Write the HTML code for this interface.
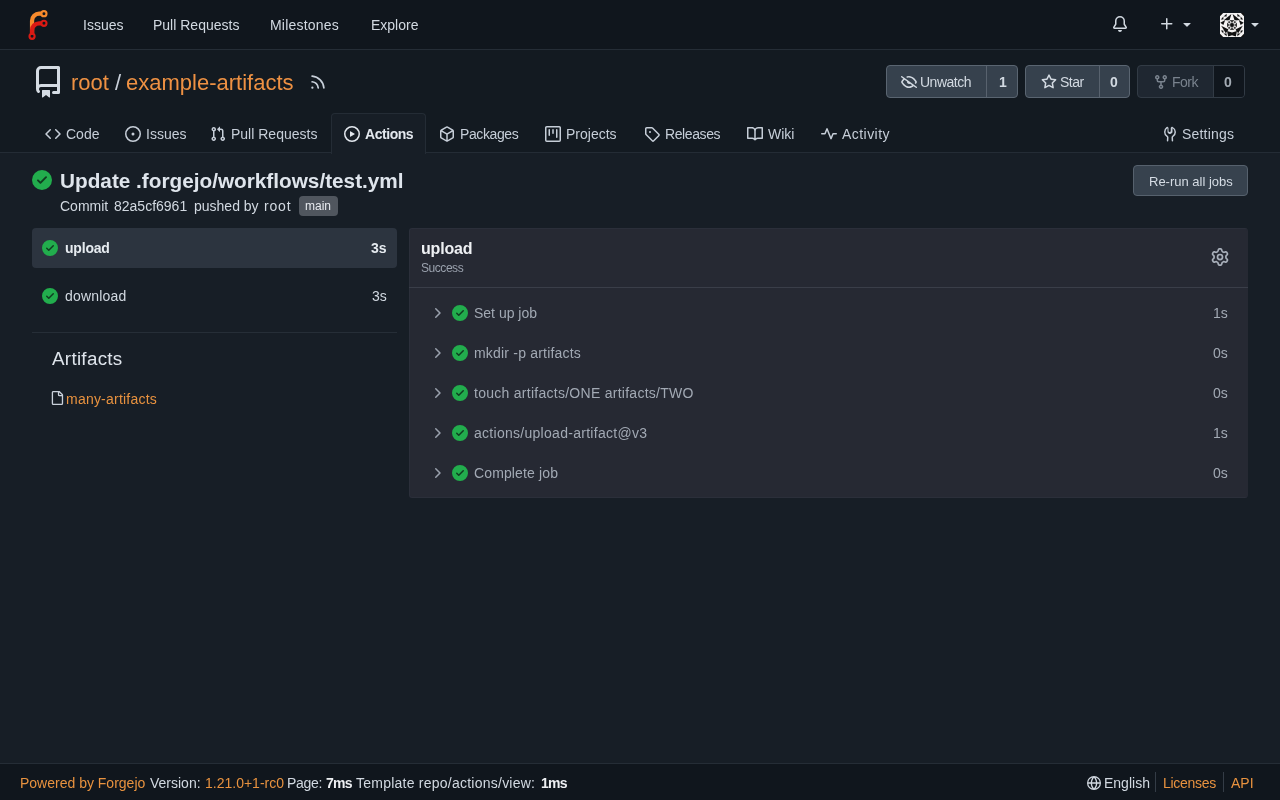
<!DOCTYPE html>
<html>
<head>
<meta charset="utf-8">
<style>
*{box-sizing:border-box;margin:0;padding:0}
html,body{width:1280px;height:800px;overflow:hidden}
body{background:#171e26;font-family:"Liberation Sans",sans-serif;font-size:14px;color:#d2d9e1;position:relative}
.a{position:absolute}
.t{position:absolute;white-space:nowrap;line-height:14px}
svg{display:block}
.ic{fill:currentColor}
#nav{left:0;top:0;width:1280px;height:50px;background:#10161d;border-bottom:1px solid #252d36}
#hdr{left:0;top:50px;width:1280px;height:103px;background:#131a21;border-bottom:1px solid #242c35}
.org{color:#ee9143}
.tab{color:#c6ced8}
.btn{position:absolute;border:1px solid #5a6571;border-radius:4px;background:#36414d;height:33px}
#foot{left:0;top:763px;width:1280px;height:37px;background:#10161d;border-top:1px solid #252d36}
</style>
</head>
<body>
<div id="wrap" style="position:absolute;left:0;top:0;width:1280px;height:800px;will-change:transform">
<!-- NAVBAR -->
<div id="nav" class="a">
  <svg class="a" style="left:23px;top:10px" width="30" height="30" viewBox="0 0 212 212">
    <g transform="translate(6,6)" fill="none">
      <path d="M58 168 v-98 a50 50 0 0 1 50-50 h20" stroke="#f78a2c" stroke-width="30"/>
      <path d="M58 168 v-30 a50 50 0 0 1 50-50 h20" stroke="#d91a14" stroke-width="30"/>
      <circle cx="142" cy="20" r="18" stroke="#f78a2c" stroke-width="15"/>
      <circle cx="142" cy="88" r="18" stroke="#d91a14" stroke-width="15"/>
      <circle cx="58" cy="180" r="18" stroke="#d91a14" stroke-width="15"/>
    </g>
  </svg>
  <span class="t" style="left:83px;top:18px">Issues</span>
  <span class="t" style="left:153px;top:18px">Pull Requests</span>
  <span class="t" style="left:270px;top:18px;letter-spacing:0.2px">Milestones</span>
  <span class="t" style="left:371px;top:18px">Explore</span>
  <svg class="a ic" style="left:1112px;top:16px;color:#d2d9e1" width="16" height="16" viewBox="0 0 16 16"><path d="M8 16a2 2 0 0 0 1.985-1.75c.017-.137-.097-.25-.235-.25h-3.5c-.138 0-.252.113-.235.25A2 2 0 0 0 8 16ZM3 5a5 5 0 0 1 10 0v2.947c0 .05.015.098.042.139l1.703 2.555A1.519 1.519 0 0 1 13.482 13H2.518a1.516 1.516 0 0 1-1.263-2.360l1.703-2.554A.255.255 0 0 0 3 7.947Zm5-3.5A3.5 3.5 0 0 0 4.5 5v2.947c0 .346-.102.683-.294.970l-1.703 2.556a.017.017 0 0 0-.003.01l.001.006c0 .002.002.004.004.006l.006.004.007.001h10.964l.007-.001.006-.004.004-.006.001-.007a.017.017 0 0 0-.003-.01l-1.703-2.554a1.745 1.745 0 0 1-.294-.97V5A3.5 3.5 0 0 0 8 1.5Z"/></svg>
  <svg class="a ic" style="left:1159px;top:16px;color:#d2d9e1" width="16" height="16" viewBox="0 0 16 16"><path d="M7.75 2a.75.75 0 0 1 .75.75V7h4.25a.75.75 0 0 1 0 1.5H8.5v4.25a.75.75 0 0 1-1.5 0V8.5H2.75a.75.75 0 0 1 0-1.5H7V2.75A.75.75 0 0 1 7.75 2Z"/></svg>
  <svg class="a ic" style="left:1179px;top:16px;color:#d2d9e1" width="16" height="16" viewBox="0 0 16 16"><path d="m4.427 7.427 3.396 3.396a.25.25 0 0 0 .354 0l3.396-3.396A.25.25 0 0 0 11.396 7H4.604a.25.25 0 0 0-.177.427Z"/></svg>
  <svg class="a" style="left:1220px;top:13px" width="24" height="24" viewBox="0 0 24 24">
    <rect width="24" height="24" fill="#f5f3f3"/>
    <circle cx="12" cy="12" r="4.6" fill="#9c9c9c"/>
    <g fill="#111"><polygon points="11.40,1.00 4.00,6.90 9.40,7.40"/><polygon points="12.60,1.00 20.00,6.90 14.60,7.40"/><polygon points="0.30,9.80 5.20,7.00 3.40,12.00"/><polygon points="23.70,9.80 18.80,7.00 20.60,12.00"/><polygon points="1.20,12.80 8.60,16.60 5.80,20.20"/><polygon points="22.80,12.80 15.40,16.60 18.20,20.20"/><polygon points="0.00,0.00 3.20,0.00 0.00,3.20"/><polygon points="24.00,0.00 20.80,0.00 24.00,3.20"/><polygon points="6.60,0.80 3.60,3.40 6.60,3.40"/><polygon points="17.40,0.80 20.40,3.40 17.40,3.40"/><polygon points="0.80,6.60 3.40,3.60 3.40,6.60"/><polygon points="23.20,6.60 20.60,3.60 20.60,6.60"/><polygon points="0.00,24.00 3.20,24.00 0.00,20.80"/><polygon points="24.00,24.00 20.80,24.00 24.00,20.80"/><polygon points="0.80,17.40 3.40,20.40 3.40,17.40"/><polygon points="23.20,17.40 20.60,20.40 20.60,17.40"/><polygon points="6.60,23.20 3.60,20.60 6.60,20.60"/><polygon points="17.40,23.20 20.40,20.60 17.40,20.60"/><polygon points="7.00,18.00 12.00,19.40 17.00,18.00 15.80,23.40 12.00,22.20 8.20,23.40"/>
      <circle cx="12" cy="12" r="1.9"/>
      <path d="M9.6 7.2 Q12 10.2 14.4 7.2Z M9.6 16.8 Q12 13.8 14.4 16.8Z M7.2 9.6 Q10.2 12 7.2 14.4Z M16.8 9.6 Q13.8 12 16.8 14.4Z"/>
    </g>
    <g fill="#111" stroke="#f5f3f3" stroke-width="0.9">
      <circle cx="9.1" cy="9.1" r="1.4"/><circle cx="14.9" cy="9.1" r="1.4"/><circle cx="9.1" cy="14.9" r="1.4"/><circle cx="14.9" cy="14.9" r="1.4"/>
    </g>
  </svg>
  <svg class="a ic" style="left:1247px;top:16px;color:#d2d9e1" width="16" height="16" viewBox="0 0 16 16"><path d="m4.427 7.427 3.396 3.396a.25.25 0 0 0 .354 0l3.396-3.396A.25.25 0 0 0 11.396 7H4.604a.25.25 0 0 0-.177.427Z"/></svg>
</div>

<!-- REPO HEADER -->
<div id="hdr" class="a">
  <svg class="a ic" style="left:32px;top:16px;color:#d5dce4" width="32" height="32" viewBox="0 0 16 16"><path d="M2 2.5A2.5 2.5 0 0 1 4.5 0h8.75a.75.75 0 0 1 .75.75v12.5a.75.75 0 0 1-.75.75h-2.5a.75.75 0 0 1 0-1.5h1.75v-2h-8a1 1 0 0 0-.714 1.7.75.75 0 1 1-1.072 1.05A2.495 2.495 0 0 1 2 11.5Zm10.5-1h-8a1 1 0 0 0-1 1v6.708A2.486 2.486 0 0 1 4.5 9h8ZM5 12.25a.25.25 0 0 1 .25-.25h3.5a.25.25 0 0 1 .25.25v3.25a.25.25 0 0 1-.4.2l-1.45-1.087a.25.25 0 0 0-.3 0L5.4 15.7a.25.25 0 0 1-.4-.2Z"/></svg>
  <span class="t org" style="left:71px;top:22px;font-size:22px;line-height:22px">root</span>
  <span class="t" style="left:115px;top:22px;font-size:22px;line-height:22px;color:#c9d1db">/</span>
  <span class="t org" style="left:126px;top:22px;font-size:22px;line-height:22px">example-artifacts</span>
  <svg class="a ic" style="left:308.5px;top:23px;color:#c9d1db" width="18" height="18" viewBox="0 0 16 16"><path d="M2.002 2.725a.75.75 0 0 1 .797-.699C8.79 2.42 13.58 7.21 13.974 13.201a.75.75 0 0 1-1.497.098 10.502 10.502 0 0 0-9.776-9.776.747.747 0 0 1-.7-.798ZM2.84 7.05h-.002a7.002 7.002 0 0 1 6.113 6.111.75.75 0 0 1-1.49.178 5.503 5.503 0 0 0-4.8-4.8.75.75 0 0 1 .179-1.489ZM2 13a1 1 0 1 1 2 0 1 1 0 0 1-2 0Z"/></svg>

  <!-- watch -->
  <div class="btn" style="left:886px;top:15px;width:132px"></div>
  <div class="a" style="left:986px;top:16px;width:1px;height:31px;background:#58626e"></div>
  <svg class="a ic" style="left:901px;top:24px;color:#d2d9e1" width="16" height="16" viewBox="0 0 16 16"><path d="M.143 2.31a.75.75 0 0 1 1.047-.167l14.5 10.5a.75.75 0 1 1-.88 1.214l-2.248-1.628C11.346 13.19 9.792 14 8 14c-1.981 0-3.67-.992-4.933-2.078C1.797 10.832.88 9.577.43 8.9a1.619 1.619 0 0 1 0-1.797c.353-.533.995-1.42 1.868-2.305L.31 3.357A.75.75 0 0 1 .143 2.31Zm1.536 5.622A.12.12 0 0 0 1.657 8c0 .021.006.045.022.068.412.621 1.242 1.75 2.366 2.717C5.175 11.758 6.527 12.5 8 12.5c1.195 0 2.31-.488 3.29-1.191L9.063 9.695A2 2 0 0 1 6.058 7.52L3.529 5.688a14.207 14.207 0 0 0-1.85 2.244ZM8 3.5c-.516 0-1.017.09-1.499.251a.75.75 0 1 1-.473-1.423A6.207 6.207 0 0 1 8 2c1.981 0 3.67.992 4.933 2.078 1.27 1.091 2.187 2.345 2.637 3.023a1.62 1.62 0 0 1 0 1.798c-.11.166-.248.365-.41.587a.75.75 0 1 1-1.21-.887c.148-.201.272-.382.371-.53a.119.119 0 0 0 0-.137c-.412-.621-1.242-1.75-2.366-2.717C10.825 4.242 9.473 3.5 8 3.5Z"/></svg>
  <span class="t" style="left:920px;top:25px;letter-spacing:-0.5px">Unwatch</span>
  <span class="t" style="left:999px;top:25px;font-weight:bold">1</span>

  <!-- star -->
  <div class="btn" style="left:1025px;top:15px;width:105px"></div>
  <div class="a" style="left:1099px;top:16px;width:1px;height:31px;background:#58626e"></div>
  <svg class="a ic" style="left:1041px;top:24px;color:#d2d9e1" width="16" height="16" viewBox="0 0 16 16"><path d="M8 .25a.75.75 0 0 1 .673.418l1.882 3.815 4.21.612a.75.75 0 0 1 .416 1.279l-3.046 2.97.719 4.192a.751.751 0 0 1-1.088.791L8 12.347l-3.766 1.98a.75.75 0 0 1-1.088-.79l.72-4.194L.818 6.374a.75.75 0 0 1 .416-1.28l4.21-.611L7.327.668A.75.75 0 0 1 8 .25Zm0 2.445L6.615 5.5a.75.75 0 0 1-.564.41l-3.097.45 2.24 2.184a.75.75 0 0 1 .216.664l-.528 3.084 2.769-1.456a.75.75 0 0 1 .698 0l2.77 1.456-.53-3.084a.75.75 0 0 1 .216-.664l2.24-2.183-3.096-.45a.75.75 0 0 1-.564-.41L8 2.694Z"/></svg>
  <span class="t" style="left:1060px;top:25px;letter-spacing:-0.5px">Star</span>
  <span class="t" style="left:1110px;top:25px;font-weight:bold">0</span>

  <!-- fork (disabled) -->
  <div class="btn" style="left:1137px;top:15px;width:108px;background:#1f2731;border-color:#323b45"></div>
  <div class="a" style="left:1213px;top:16px;width:31px;height:31px;background:#10161d;border-left:1px solid #323b45;border-radius:0 3px 3px 0"></div>
  <svg class="a ic" style="left:1153px;top:24px;color:#7a838e" width="16" height="16" viewBox="0 0 16 16"><path d="M5 5.372v.878c0 .414.336.75.75.75h4.5a.75.75 0 0 0 .75-.75v-.878a2.25 2.25 0 1 1 1.5 0v.878a2.25 2.25 0 0 1-2.25 2.25h-1.5v2.128a2.251 2.251 0 1 1-1.5 0V8.5h-1.5A2.25 2.25 0 0 1 3.5 6.25v-.878a2.25 2.25 0 1 1 1.5 0ZM5 3.25a.75.75 0 1 0-1.5 0 .75.75 0 0 0 1.5 0Zm6.75.75a.75.75 0 1 0 0-1.5.75.75 0 0 0 0 1.5Zm-3 8.75a.75.75 0 1 0-1.5 0 .75.75 0 0 0 1.5 0Z"/></svg>
  <span class="t" style="left:1172px;top:25px;color:#7a838e;letter-spacing:-0.5px">Fork</span>
  <span class="t" style="left:1224px;top:25px;font-weight:bold;color:#a3abb4">0</span>

  <!-- tabs -->
  <div class="a" style="left:331px;top:63px;width:95px;height:41px;background:#171e26;border:1px solid #242c35;border-bottom:none;border-radius:4px 4px 0 0"></div>
  <svg class="a ic tab" style="left:45px;top:76px" width="16" height="16" viewBox="0 0 16 16"><path d="m11.28 3.22 4.25 4.25a.75.75 0 0 1 0 1.06l-4.25 4.250a.749.749 0 0 1-1.275-.326.749.749 0 0 1 .215-.734L13.94 8l-3.720-3.72a.749.749 0 0 1 .326-1.275.749.749 0 0 1 .734.215Zm-6.56 0a.751.751 0 0 1 1.042.018.751.751 0 0 1 .018 1.042L2.06 8l3.72 3.72a.749.749 0 0 1-.326 1.275.749.749 0 0 1-.734-.215L.47 8.53a.75.75 0 0 1 0-1.06Z"/></svg>
  <span class="t tab" style="left:66px;top:77px">Code</span>
  <svg class="a ic tab" style="left:125px;top:76px" width="16" height="16" viewBox="0 0 16 16"><path d="M8 9.5a1.5 1.5 0 1 0 0-3 1.5 1.5 0 0 0 0 3Z"/><path d="M8 0a8 8 0 1 1 0 16A8 8 0 0 1 8 0ZM1.5 8a6.5 6.5 0 1 0 13 0 6.5 6.5 0 0 0-13 0Z"/></svg>
  <span class="t tab" style="left:146px;top:77px">Issues</span>
  <svg class="a ic tab" style="left:210px;top:76px" width="16" height="16" viewBox="0 0 16 16"><path d="M1.5 3.25a2.25 2.25 0 1 1 3 2.122v5.256a2.251 2.251 0 1 1-1.5 0V5.372A2.25 2.25 0 0 1 1.5 3.25Zm5.677-.177L9.573.677A.25.25 0 0 1 10 .854V2.5h1A2.5 2.5 0 0 1 13.5 5v5.628a2.251 2.251 0 1 1-1.5 0V5a1 1 0 0 0-1-1h-1v1.646a.25.25 0 0 1-.427.177L7.177 3.427a.25.25 0 0 1 0-.354ZM3.75 2.5a.75.75 0 1 0 0 1.5.75.75 0 0 0 0-1.5Zm0 9.5a.75.75 0 1 0 0 1.5.75.75 0 0 0 0-1.5Zm8.25.75a.75.75 0 1 0 1.5 0 .75.75 0 0 0-1.5 0Z"/></svg>
  <span class="t tab" style="left:231px;top:77px">Pull Requests</span>
  <svg class="a ic" style="left:344px;top:76px;color:#e3e8ee" width="16" height="16" viewBox="0 0 16 16"><path d="M8 0a8 8 0 1 1 0 16A8 8 0 0 1 8 0ZM1.5 8a6.5 6.5 0 1 0 13 0 6.5 6.5 0 0 0-13 0Zm4.879-2.773 4.264 2.559a.25.25 0 0 1 0 .428l-4.264 2.559A.25.25 0 0 1 6 10.559V5.442a.25.25 0 0 1 .379-.215Z"/></svg>
  <span class="t" style="left:365px;top:77px;font-weight:bold;color:#e3e8ee;letter-spacing:-0.45px">Actions</span>
  <svg class="a ic tab" style="left:439px;top:76px" width="16" height="16" viewBox="0 0 16 16"><path d="m8.878.392 5.25 3.045c.54.314.872.89.872 1.514v6.098a1.75 1.75 0 0 1-.872 1.514l-5.25 3.045a1.75 1.75 0 0 1-1.756 0l-5.25-3.045A1.75 1.75 0 0 1 1 11.049V4.951c0-.624.332-1.201.872-1.514L7.122.392a1.75 1.75 0 0 1 1.756 0ZM7.875 1.69l-4.63 2.685L8 7.133l4.755-2.758-4.63-2.685a.248.248 0 0 0-.25 0ZM2.5 5.677v5.372c0 .09.047.171.125.216l4.625 2.683V8.432Zm6.250 8.271 4.625-2.683a.25.25 0 0 0 .125-.216V5.677L8.75 8.432Z"/></svg>
  <span class="t tab" style="left:460px;top:77px;letter-spacing:-0.4px">Packages</span>
  <svg class="a ic tab" style="left:545px;top:76px" width="16" height="16" viewBox="0 0 16 16"><path d="M1.75 0h12.5C15.216 0 16 .784 16 1.75v12.5A1.75 1.75 0 0 1 14.25 16H1.75A1.75 1.75 0 0 1 0 14.25V1.75C0 .784.784 0 1.75 0ZM1.5 1.75v12.5c0 .138.112.25.25.25h12.5a.25.25 0 0 0 .25-.25V1.75a.25.25 0 0 0-.25-.25H1.75a.25.25 0 0 0-.25.25ZM11.75 3a.75.75 0 0 1 .75.75v7.5a.75.75 0 0 1-1.5 0v-7.5a.75.75 0 0 1 .75-.75Zm-8.25.75a.75.75 0 0 1 1.5 0v5.5a.75.75 0 0 1-1.5 0ZM8 3a.75.75 0 0 1 .75.75v3.5a.75.75 0 0 1-1.5 0v-3.5A.75.75 0 0 1 8 3Z"/></svg>
  <span class="t tab" style="left:566px;top:77px">Projects</span>
  <svg class="a ic tab" style="left:644px;top:76px" width="16" height="16" viewBox="0 0 16 16"><path d="M1 7.775V2.75C1 1.784 1.784 1 2.75 1h5.025c.464 0 .91.184 1.238.513l6.25 6.25a1.75 1.75 0 0 1 0 2.474l-5.026 5.026a1.75 1.75 0 0 1-2.474 0l-6.25-6.25A1.752 1.752 0 0 1 1 7.775Zm1.5 0c0 .066.026.13.073.177l6.25 6.25a.25.25 0 0 0 .354 0l5.025-5.025a.25.25 0 0 0 0-.354l-6.25-6.25a.25.25 0 0 0-.177-.073H2.75a.25.25 0 0 0-.25.25ZM6 5a1 1 0 1 1 0 2 1 1 0 0 1 0-2Z"/></svg>
  <span class="t tab" style="left:665px;top:77px;letter-spacing:-0.4px">Releases</span>
  <svg class="a ic tab" style="left:747px;top:76px" width="16" height="16" viewBox="0 0 16 16"><path d="M0 1.75A.75.75 0 0 1 .75 1h4.253c1.227 0 2.317.59 3 1.501A3.743 3.743 0 0 1 11.006 1h4.245a.75.75 0 0 1 .75.75v10.5a.75.75 0 0 1-.75.75h-4.507a2.25 2.25 0 0 0-1.591.659l-.622.621a.75.75 0 0 1-1.060 0l-.622-.621A2.25 2.25 0 0 0 5.258 13H.75a.75.75 0 0 1-.75-.75Zm7.251 10.324.004-5.073-.002-2.253A2.25 2.25 0 0 0 5.003 2.5H1.5v9h3.757a3.75 3.75 0 0 1 1.994.574ZM8.755 4.75l-.004 7.322a3.752 3.752 0 0 1 1.992-.572H14.5v-9h-3.495a2.25 2.25 0 0 0-2.25 2.25Z"/></svg>
  <span class="t tab" style="left:768px;top:77px">Wiki</span>
  <svg class="a ic tab" style="left:821px;top:76px" width="16" height="16" viewBox="0 0 16 16"><path d="M6 2c.306 0 .582.187.696.471L10 10.731l1.304-3.26A.751.751 0 0 1 12 7h3.25a.75.75 0 0 1 0 1.5h-2.742l-1.812 4.528a.751.751 0 0 1-1.392 0L6 4.770 4.696 8.030A.75.75 0 0 1 4 8.5H.75a.75.75 0 0 1 0-1.5h2.742l1.812-4.529A.751.751 0 0 1 6 2Z"/></svg>
  <span class="t tab" style="left:842px;top:77px;letter-spacing:0.45px">Activity</span>
  <svg class="a ic tab" style="left:1162px;top:76px" width="16" height="16" viewBox="0 0 16 16"><path d="M5.433 2.304A4.492 4.492 0 0 0 3.5 6c0 1.598.832 3.002 2.09 3.802.518.328.929.923.902 1.640v.008l-.164 3.337a.75.75 0 1 1-1.498-.073l.163-3.33c.002-.085-.05-.216-.207-.316A5.996 5.996 0 0 1 2 6a5.993 5.993 0 0 1 2.567-4.920 1.482 1.482 0 0 1 .79-.264c.14-.006.279.017.41.068.418.163.733.558.733 1.060v3.256a.25.25 0 0 0 .125.216l.875.505a.25.25 0 0 0 .25 0l.875-.505a.25.25 0 0 0 .125-.216V1.944c0-.502.315-.897.733-1.060a.945.945 0 0 1 .41-.068c.28.011.547.113.79.264A5.993 5.993 0 0 1 14 6a5.996 5.996 0 0 1-2.786 5.068c-.157.1-.21.231-.207.316l.163 3.33a.75.75 0 1 1-1.498.073l-.164-3.337v-.008c-.027-.717.384-1.312.902-1.640A4.495 4.495 0 0 0 12.5 6a4.492 4.492 0 0 0-1.933-3.696c-.024.017-.067.067-.067.14v3.256a1.75 1.75 0 0 1-.875 1.516l-.875.505a1.75 1.75 0 0 1-1.75 0l-.875-.505A1.75 1.75 0 0 1 5.5 5.7V2.444c0-.073-.043-.123-.067-.14Z"/></svg>
  <span class="t tab" style="left:1182px;top:77px;letter-spacing:0.2px">Settings</span>
</div>


<!-- MAIN -->
<svg class="a" style="left:32px;top:170px" width="20" height="20" viewBox="0 0 16 16"><circle cx="8" cy="8" r="7.6" fill="#103d20"/><path fill="#22ad4d" d="M8 16A8 8 0 1 1 8 0a8 8 0 0 1 0 16Zm3.78-9.72a.751.751 0 0 0-.018-1.042.751.751 0 0 0-1.042-.018L6.75 9.19 5.28 7.72a.751.751 0 0 0-1.042.018.751.751 0 0 0-.018 1.042l2 2a.75.75 0 0 0 1.06 0Z"/></svg>
<span class="t" style="left:60px;top:171px;font-size:20.75px;line-height:20px;font-weight:bold;color:#dfe5ec">Update .forgejo/workflows/test.yml</span>
<span class="t" style="left:60px;top:199px">Commit</span>
<span class="t" style="left:114px;top:199px">82a5cf6961</span>
<span class="t" style="left:194px;top:199px">pushed by</span>
<span class="t" style="left:264px;top:199px;letter-spacing:.8px">root</span>
<div class="a" style="left:299px;top:196px;width:39px;height:20px;background:#50565e;border-radius:4px"></div>
<span class="t" style="left:305px;top:199px;font-size:12px;color:#e6e9ee">main</span>

<div class="a" style="left:1133px;top:165px;width:115px;height:31px;background:#37424e;border:1px solid #56616d;border-radius:4px"></div>
<span class="t" style="left:1149px;top:175px;font-size:13px;color:#d5dce4">Re-run all jobs</span>

<!-- left -->
<div class="a" style="left:32px;top:228px;width:365px;height:40px;background:#2c343f;border-radius:4px"></div>
<svg class="a" style="left:42px;top:240px" width="16" height="16" viewBox="0 0 16 16"><circle cx="8" cy="8" r="7.6" fill="#103d20"/><path fill="#22ad4d" d="M8 16A8 8 0 1 1 8 0a8 8 0 0 1 0 16Zm3.78-9.72a.751.751 0 0 0-.018-1.042.751.751 0 0 0-1.042-.018L6.75 9.19 5.28 7.72a.751.751 0 0 0-1.042.018.751.751 0 0 0-.018 1.042l2 2a.75.75 0 0 0 1.06 0Z"/></svg>
<span class="t" style="left:65px;top:241px;font-weight:bold;color:#e6ebf0;letter-spacing:-0.2px">upload</span>
<span class="t" style="left:371px;top:241px;font-weight:bold;color:#e6ebf0">3s</span>
<svg class="a" style="left:42px;top:288px" width="16" height="16" viewBox="0 0 16 16"><circle cx="8" cy="8" r="7.6" fill="#103d20"/><path fill="#22ad4d" d="M8 16A8 8 0 1 1 8 0a8 8 0 0 1 0 16Zm3.78-9.72a.751.751 0 0 0-.018-1.042.751.751 0 0 0-1.042-.018L6.75 9.19 5.28 7.72a.751.751 0 0 0-1.042.018.751.751 0 0 0-.018 1.042l2 2a.75.75 0 0 0 1.06 0Z"/></svg>
<span class="t" style="left:65px;top:289px;letter-spacing:0.2px">download</span>
<span class="t" style="left:372px;top:289px">3s</span>
<div class="a" style="left:32px;top:332px;width:365px;height:1px;background:#262e37"></div>
<span class="t" style="left:52px;top:350px;font-size:18.8px;line-height:18px;color:#dfe5ec;letter-spacing:.3px">Artifacts</span>
<svg class="a ic" style="left:50px;top:391px;color:#c9d1db" width="14" height="14" viewBox="0 0 16 16"><path d="M2 1.75C2 .784 2.784 0 3.750 0h6.586c.464 0 .909.184 1.237.513l2.914 2.914c.329.328.513.773.513 1.237v9.586A1.75 1.75 0 0 1 13.25 16h-9.5A1.75 1.75 0 0 1 2 14.25Zm1.75-.25a.25.25 0 0 0-.25.25v12.5c0 .138.112.25.25.25h9.5a.25.25 0 0 0 .25-.25V6h-2.75A1.75 1.75 0 0 1 9 4.25V1.5Zm6.75.062V4.25c0 .138.112.25.25.25h2.688l-.011-.013-2.914-2.914-.013-.011Z"/></svg>
<span class="t org" style="left:66px;top:392px;color:#e8923f;letter-spacing:.22px">many-artifacts</span>

<!-- right panel -->
<div class="a" style="left:409px;top:228px;width:839px;height:270px;background:#262933;border:1px solid #2b2f3a;border-right-color:#262933;border-radius:3px"></div>
<div class="a" style="left:409px;top:287px;width:839px;height:1px;background:#3a3e49"></div>
<span class="t" style="left:421px;top:241px;font-size:16px;line-height:16px;font-weight:bold;color:#eef0f3;letter-spacing:-0.2px">upload</span>
<span class="t" style="left:421px;top:262px;font-size:12px;line-height:12px;color:#9aa1ad;letter-spacing:-.45px">Success</span>
<svg class="a ic" style="left:1211px;top:248px;color:#a9b0bb" width="18" height="18" viewBox="0 0 16 16"><path d="M8 0a8.2 8.2 0 0 1 .701.031C9.444.095 9.99.645 10.16 1.29l.288 1.107c.018.066.079.158.212.224.231.114.454.243.668.386.123.082.233.09.299.071l1.103-.303c.644-.176 1.392.021 1.82.63.27.385.506.792.704 1.218.315.675.111 1.422-.364 1.891l-.814.806c-.049.048-.098.147-.088.294.016.257.016.515 0 .772-.01.147.038.246.088.294l.814.806c.475.469.679 1.216.364 1.891a7.977 7.977 0 0 1-.704 1.217c-.428.61-1.176.807-1.82.63l-1.102-.302c-.067-.019-.177-.011-.3.071a5.909 5.909 0 0 1-.668.386c-.133.066-.194.158-.211.224l-.29 1.106c-.168.646-.715 1.196-1.458 1.26a8.006 8.006 0 0 1-1.402 0c-.743-.064-1.289-.614-1.458-1.26l-.289-1.106c-.018-.066-.079-.158-.212-.224a5.738 5.738 0 0 1-.668-.386c-.123-.082-.233-.09-.299-.071l-1.103.303c-.644.176-1.392-.021-1.82-.63a8.12 8.12 0 0 1-.704-1.218c-.315-.675-.111-1.422.363-1.891l.815-.806c.05-.048.098-.147.088-.294a6.214 6.214 0 0 1 0-.772c.01-.147-.038-.246-.088-.294l-.815-.806C.635 6.045.431 5.298.746 4.623a7.92 7.92 0 0 1 .704-1.217c.428-.61 1.176-.807 1.82-.63l1.102.302c.067.019.177.011.3-.071.214-.143.437-.272.668-.386.133-.066.194-.158.211-.224l.29-1.106C6.009.645 6.556.095 7.299.03 7.53.01 7.764 0 8 0Zm-.571 1.525c-.036.003-.108.036-.137.146l-.289 1.105c-.147.561-.549.967-.998 1.189-.173.086-.34.183-.5.29-.417.278-.97.423-1.529.27l-1.103-.303c-.109-.03-.175.016-.195.045-.22.312-.412.644-.573.99-.014.031-.021.11.059.19l.815.806c.411.406.562.957.53 1.456a4.709 4.709 0 0 0 0 .582c.032.499-.119 1.05-.53 1.456l-.815.806c-.081.08-.073.159-.059.19.162.346.353.677.573.989.02.03.085.076.195.046l1.102-.303c.56-.153 1.113-.008 1.53.27.161.107.328.204.501.29.447.222.85.629.997 1.189l.289 1.105c.029.109.101.143.137.146a6.6 6.6 0 0 0 1.142 0c.036-.003.108-.036.137-.146l.289-1.105c.147-.561.549-.967.998-1.189.173-.086.34-.183.5-.29.417-.278.97-.423 1.529-.27l1.103.303c.109.029.175-.016.195-.045.22-.313.411-.644.573-.99.014-.031.021-.11-.059-.19l-.815-.806c-.411-.406-.562-.957-.53-1.456a4.709 4.709 0 0 0 0-.582c-.032-.499.119-1.05.53-1.456l.815-.806c.081-.08.073-.159.059-.19a6.464 6.464 0 0 0-.573-.989c-.02-.03-.085-.076-.195-.046l-1.102.303c-.56.153-1.113.008-1.53-.27a4.44 4.44 0 0 0-.501-.29c-.447-.222-.85-.629-.997-1.189l-.289-1.105c-.029-.11-.101-.143-.137-.146a6.6 6.6 0 0 0-1.142 0ZM11 8a3 3 0 1 1-6 0 3 3 0 0 1 6 0ZM9.5 8a1.5 1.5 0 1 0-3.001.001A1.5 1.5 0 0 0 9.5 8Z"/></svg>

  <svg class="a ic" style="left:429px;top:305px;color:#9aa1ad" width="16" height="16" viewBox="0 0 16 16"><path d="M6.22 3.22a.75.75 0 0 1 1.06 0l4.25 4.25a.75.75 0 0 1 0 1.06l-4.25 4.25a.751.751 0 0 1-1.042-.018.751.751 0 0 1-.018-1.042L9.94 8 6.22 4.28a.75.75 0 0 1 0-1.06Z"/></svg>
  <svg class="a" style="left:452px;top:305px" width="16" height="16" viewBox="0 0 16 16"><circle cx="8" cy="8" r="7.6" fill="#103d20"/><path fill="#22ad4d" d="M8 16A8 8 0 1 1 8 0a8 8 0 0 1 0 16Zm3.78-9.72a.751.751 0 0 0-.018-1.042.751.751 0 0 0-1.042-.018L6.75 9.19 5.28 7.72a.751.751 0 0 0-1.042.018.751.751 0 0 0-.018 1.042l2 2a.75.75 0 0 0 1.06 0Z"/></svg>
  <span class="t" style="left:474px;top:306px;color:#a2a9b4">Set up job</span>
  <span class="t" style="left:1213px;top:306px;color:#a2a9b4">1s</span>
  <svg class="a ic" style="left:429px;top:345px;color:#9aa1ad" width="16" height="16" viewBox="0 0 16 16"><path d="M6.22 3.22a.75.75 0 0 1 1.06 0l4.25 4.25a.75.75 0 0 1 0 1.06l-4.25 4.25a.751.751 0 0 1-1.042-.018.751.751 0 0 1-.018-1.042L9.94 8 6.22 4.28a.75.75 0 0 1 0-1.06Z"/></svg>
  <svg class="a" style="left:452px;top:345px" width="16" height="16" viewBox="0 0 16 16"><circle cx="8" cy="8" r="7.6" fill="#103d20"/><path fill="#22ad4d" d="M8 16A8 8 0 1 1 8 0a8 8 0 0 1 0 16Zm3.78-9.72a.751.751 0 0 0-.018-1.042.751.751 0 0 0-1.042-.018L6.75 9.19 5.28 7.72a.751.751 0 0 0-1.042.018.751.751 0 0 0-.018 1.042l2 2a.75.75 0 0 0 1.06 0Z"/></svg>
  <span class="t" style="left:474px;top:346px;color:#a2a9b4;letter-spacing:0.2px">mkdir -p artifacts</span>
  <span class="t" style="left:1213px;top:346px;color:#a2a9b4">0s</span>
  <svg class="a ic" style="left:429px;top:385px;color:#9aa1ad" width="16" height="16" viewBox="0 0 16 16"><path d="M6.22 3.22a.75.75 0 0 1 1.06 0l4.25 4.25a.75.75 0 0 1 0 1.06l-4.25 4.25a.751.751 0 0 1-1.042-.018.751.751 0 0 1-.018-1.042L9.94 8 6.22 4.28a.75.75 0 0 1 0-1.06Z"/></svg>
  <svg class="a" style="left:452px;top:385px" width="16" height="16" viewBox="0 0 16 16"><circle cx="8" cy="8" r="7.6" fill="#103d20"/><path fill="#22ad4d" d="M8 16A8 8 0 1 1 8 0a8 8 0 0 1 0 16Zm3.78-9.72a.751.751 0 0 0-.018-1.042.751.751 0 0 0-1.042-.018L6.75 9.19 5.28 7.72a.751.751 0 0 0-1.042.018.751.751 0 0 0-.018 1.042l2 2a.75.75 0 0 0 1.06 0Z"/></svg>
  <span class="t" style="left:474px;top:386px;color:#a2a9b4;letter-spacing:0.27px">touch artifacts/ONE artifacts/TWO</span>
  <span class="t" style="left:1213px;top:386px;color:#a2a9b4">0s</span>
  <svg class="a ic" style="left:429px;top:425px;color:#9aa1ad" width="16" height="16" viewBox="0 0 16 16"><path d="M6.22 3.22a.75.75 0 0 1 1.06 0l4.25 4.25a.75.75 0 0 1 0 1.06l-4.25 4.25a.751.751 0 0 1-1.042-.018.751.751 0 0 1-.018-1.042L9.94 8 6.22 4.28a.75.75 0 0 1 0-1.06Z"/></svg>
  <svg class="a" style="left:452px;top:425px" width="16" height="16" viewBox="0 0 16 16"><circle cx="8" cy="8" r="7.6" fill="#103d20"/><path fill="#22ad4d" d="M8 16A8 8 0 1 1 8 0a8 8 0 0 1 0 16Zm3.78-9.72a.751.751 0 0 0-.018-1.042.751.751 0 0 0-1.042-.018L6.75 9.19 5.28 7.72a.751.751 0 0 0-1.042.018.751.751 0 0 0-.018 1.042l2 2a.75.75 0 0 0 1.06 0Z"/></svg>
  <span class="t" style="left:474px;top:426px;color:#a2a9b4;letter-spacing:0.28px">actions/upload-artifact@v3</span>
  <span class="t" style="left:1213px;top:426px;color:#a2a9b4">1s</span>
  <svg class="a ic" style="left:429px;top:465px;color:#9aa1ad" width="16" height="16" viewBox="0 0 16 16"><path d="M6.22 3.22a.75.75 0 0 1 1.06 0l4.25 4.25a.75.75 0 0 1 0 1.06l-4.25 4.25a.751.751 0 0 1-1.042-.018.751.751 0 0 1-.018-1.042L9.94 8 6.22 4.28a.75.75 0 0 1 0-1.06Z"/></svg>
  <svg class="a" style="left:452px;top:465px" width="16" height="16" viewBox="0 0 16 16"><circle cx="8" cy="8" r="7.6" fill="#103d20"/><path fill="#22ad4d" d="M8 16A8 8 0 1 1 8 0a8 8 0 0 1 0 16Zm3.78-9.72a.751.751 0 0 0-.018-1.042.751.751 0 0 0-1.042-.018L6.75 9.19 5.28 7.72a.751.751 0 0 0-1.042.018.751.751 0 0 0-.018 1.042l2 2a.75.75 0 0 0 1.06 0Z"/></svg>
  <span class="t" style="left:474px;top:466px;color:#a2a9b4;letter-spacing:0.13px">Complete job</span>
  <span class="t" style="left:1213px;top:466px;color:#a2a9b4">0s</span>

<!-- FOOTER -->
<div id="foot" class="a">
  <span class="t org" style="left:20px;top:12px;color:#e8923f">Powered by Forgejo</span>
  <span class="t" style="left:150px;top:12px">Version:</span>
  <span class="t org" style="left:205px;top:12px;color:#e8923f">1.21.0+1-rc0</span>
  <span class="t" style="left:287px;top:12px;letter-spacing:-.3px">Page:</span>
  <span class="t" style="left:326px;top:12px;font-weight:bold;color:#eef0f3;letter-spacing:-.8px">7ms</span>
  <span class="t" style="left:356px;top:12px;letter-spacing:.24px">Template repo/actions/view:</span>
  <span class="t" style="left:541px;top:12px;font-weight:bold;color:#eef0f3;letter-spacing:-.7px">1ms</span>
  <svg class="a ic" style="left:1087px;top:12px;color:#d2d9e1" width="14" height="14" viewBox="0 0 16 16"><path d="M8 0a8 8 0 1 1 0 16A8 8 0 0 1 8 0ZM5.78 8.75a9.64 9.64 0 0 0 1.363 4.177c.255.426.542.832.857 1.215.245-.296.551-.705.857-1.215A9.64 9.64 0 0 0 10.22 8.75Zm4.44-1.5a9.64 9.64 0 0 0-1.363-4.177c-.307-.51-.612-.919-.857-1.215a9.927 9.927 0 0 0-.857 1.215A9.64 9.64 0 0 0 5.78 7.25Zm-5.944 1.5H1.543a6.507 6.507 0 0 0 4.666 5.5c-.123-.181-.24-.365-.352-.552-.715-1.192-1.437-2.874-1.581-4.948Zm-2.733-1.5h2.733c.144-2.074.866-3.756 1.58-4.948.12-.197.237-.381.353-.552a6.507 6.507 0 0 0-4.666 5.5Zm10.181 1.5c-.144 2.074-.866 3.756-1.58 4.948-.12.197-.237.381-.353.552a6.507 6.507 0 0 0 4.666-5.5Zm2.733-1.5a6.507 6.507 0 0 0-4.666-5.5c.123.181.24.365.353.552.714 1.192 1.436 2.874 1.58 4.948Z"/></svg>
  <span class="t" style="left:1104px;top:12px">English</span>
  <div class="a" style="left:1155px;top:8px;width:1px;height:20px;background:#343c46"></div>
  <span class="t org" style="left:1163px;top:12px;color:#e8923f;letter-spacing:-0.3px">Licenses</span>
  <div class="a" style="left:1223px;top:8px;width:1px;height:20px;background:#343c46"></div>
  <span class="t org" style="left:1231px;top:12px;color:#e8923f">API</span>
</div>
</div>
</body>
</html>
